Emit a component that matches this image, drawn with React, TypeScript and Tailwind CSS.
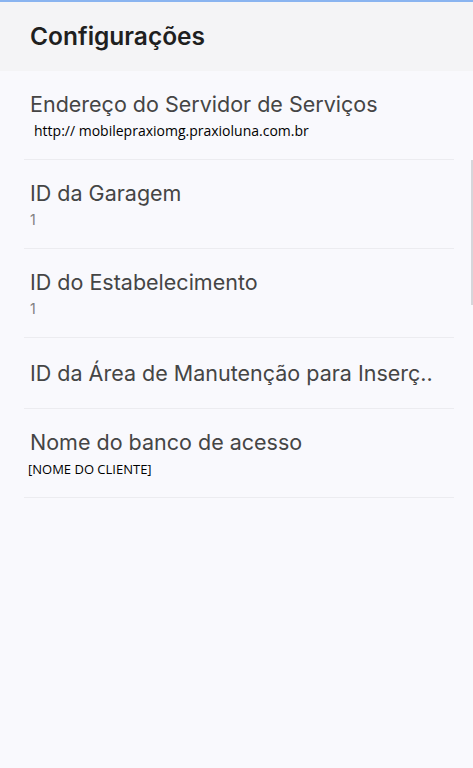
const items = [
  { title: 'Endereço do Servidor de Serviços', value: 'http:// mobilepraxiomg.praxioluna.com.br', kind: 'pasted', extra: 'pl-[10px] text-[14px]' },
  { title: 'ID da Garagem', value: '1', kind: 'value' },
  { title: 'ID do Estabelecimento', value: '1', kind: 'value' },
  { title: 'ID da Área de Manutenção para Inserç..', value: '', kind: 'none' },
  { title: 'Nome do banco de acesso', value: '[NOME DO CLIENTE]', kind: 'pasted', extra: 'pl-[4px] text-[13px]' },
]

export default function App() {
  return (
    <div className="relative min-h-[768px] w-full bg-[#f9f9fd] font-['Inter',sans-serif]">
      <div className="h-[2px] bg-[#8ab4f0]" />
      <header className="flex h-[69px] items-center bg-[#f4f4f6] px-[30px]">
        <h1 className="text-[24.5px] font-semibold text-[#1f1f1f]">Configurações</h1>
      </header>

      <ul className="ml-[24px] mr-[19px]">
        {items.map((item) => (
          <li
            key={item.title}
            className={`border-b border-[#ececf0] pl-[6px] ${item.kind === 'none' ? 'py-[22px]' : 'py-[20px]'}`}
          >
            <p className="whitespace-nowrap text-[21.5px] leading-[26px] text-[#454545]">{item.title}</p>
            {item.kind === 'value' && (
              <p className="mt-[6px] text-[14px] leading-[16px] text-[#808080]">{item.value}</p>
            )}
            {item.kind === 'pasted' && (
              <p
                className={`-ml-[6px] mt-[6px] font-['Open_Sans',sans-serif] leading-[16px] text-black ${item.extra}`}
              >
                {item.value}
              </p>
            )}
          </li>
        ))}
      </ul>

      <div className="absolute right-0 top-[160px] h-[145px] w-[2px] bg-[#d6d6da]" />
    </div>
  )
}
